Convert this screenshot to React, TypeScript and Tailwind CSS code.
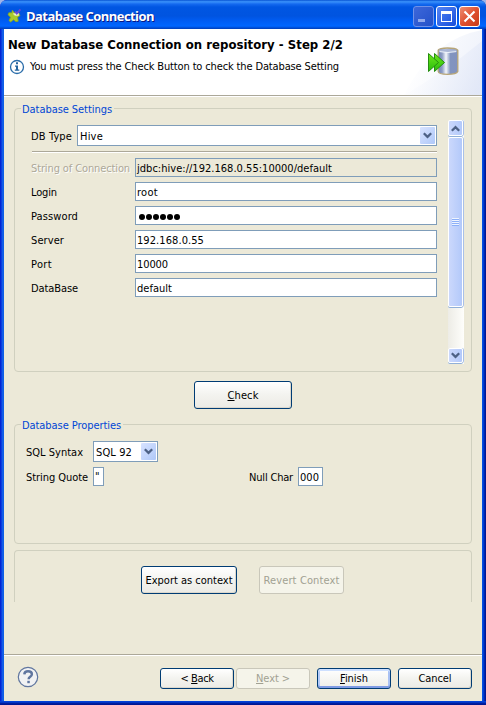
import { useLayoutEffect, useRef, useState, type ReactNode } from "react";

/** Single-line text whose tracking is adjusted so that it fills the given width. */
function Fit({ w, className = "", children }: { w: number; className?: string; children: ReactNode }) {
  const ref = useRef<HTMLSpanElement>(null);
  const [spacing, setSpacing] = useState(0);
  useLayoutEffect(() => {
    const el = ref.current;
    if (!el) return;
    const count = (el.textContent || "").length;
    setSpacing((w - el.getBoundingClientRect().width) / count);
  }, [w]);
  return (
    <span ref={ref} className={`inline-block shrink-0 whitespace-pre ${className}`} style={{ letterSpacing: `${spacing}px` }}>
      {children}
    </span>
  );
}

function Chevron({ up = false }: { up?: boolean }) {
  return (
    <svg width="9" height="7" viewBox="0 0 9 7" className={up ? "rotate-180" : ""}>
      <path d="M.8 1.2 4.5 4.9 8.2 1.2" fill="none" stroke="#4d6185" strokeWidth="2.3" />
    </svg>
  );
}

function Combo({ width, text, textWidth }: { width: string; text: string; textWidth: number }) {
  return (
    <div className={`flex h-[21px] items-center border border-[#7f9db9] bg-white p-px pl-[2px] ${width}`}>
      <Fit w={textWidth} className="pt-[2px]">{text}</Fit>
      <div className="ml-auto flex h-[17px] w-[15px] items-center justify-center rounded-[1px] bg-linear-to-br from-[#d8e3ff] to-[#afc8f8]">
        <Chevron />
      </div>
    </div>
  );
}

function Field({ label, labelWidth, value, valueWidth, disabled = false }: {
  label: string; labelWidth: number; value: string; valueWidth: number; disabled?: boolean;
}) {
  return (
    <div className="flex h-[19px] items-center">
      <div className={`flex w-[104px] items-center pt-[2px] ${disabled ? "text-[#aca899] [text-shadow:1px_1px_0_white]" : ""}`}>
        <Fit w={labelWidth}>{label}</Fit>
      </div>
      <div className={`flex h-[19px] w-[302px] items-center border border-[#7f9db9] pl-px ${disabled ? "bg-[#ece9d8]" : "bg-white"}`}>
        {label === "Password" ? (
          <span className="flex gap-px pl-[1.5px] pt-[2px]">
            {value.split("").map((_, i) => <i key={i} className="size-[6px] rounded-full bg-black" />)}
          </span>
        ) : (
          <Fit w={valueWidth} className="pt-[2px]">{value}</Fit>
        )}
      </div>
    </div>
  );
}

function Btn({ className, w, children, disabled = false, primary = false }: {
  className: string; w: number; children: ReactNode; disabled?: boolean; primary?: boolean;
}) {
  const look = disabled
    ? "border-[#c9c7ba] bg-[#f5f4ea] text-[#a1a192]"
    : primary
      ? "border-[#003c74] bg-linear-to-b from-white to-[#eeeee8] shadow-[inset_0_2px_0_#cee0ff,inset_0_-2px_0_#7f9be4,inset_2px_0_0_#b4cbf8,inset_-2px_0_0_#a9c1f3]"
      : "border-[#003c74] bg-linear-to-b from-white via-[#f3f3ef] to-[#ecebe5] shadow-[inset_-1px_-1px_0_#dcd8cd]";
  return (
    <div className={`flex items-center justify-center rounded-[3px] border ${look} ${className}`}>
      <Fit w={w} className="pt-px">{children}</Fit>
    </div>
  );
}

function Legend({ w, children }: { w: number; children: ReactNode }) {
  return (
    <div className="absolute -top-[6px] left-[6px] flex h-[14px] items-center bg-[#ece9d8] pl-px pr-[2px] text-[#0046d5]">
      <Fit w={w}>{children}</Fit>
    </div>
  );
}

function Scrollbar() {
  const face = "border border-white bg-linear-to-r from-[#cbd8fc] to-[#b3c9fa] rounded-[2px] shadow-[0_1px_0_#91b0d8,1px_0_0_#a9c0e8]";
  return (
    <div className="ml-[11px] mt-[11px] flex h-[244px] w-4 flex-col bg-linear-to-r from-[#edece6] to-[#fefefb] pr-px">
      <div className={`flex h-4 shrink-0 items-center justify-center ${face}`}><Chevron up /></div>
      <div className={`mt-px flex h-[170px] shrink-0 flex-col items-center justify-center ${face}`}>
        <div className="h-2 w-[7px] bg-[repeating-linear-gradient(to_bottom,#eef4fe_0px,#eef4fe_1px,#8cb0f8_1px,#8cb0f8_2px)]" />
      </div>
      <div className={`mt-auto mb-px flex h-[15px] shrink-0 items-center justify-center ${face}`}><Chevron /></div>
    </div>
  );
}

function TitleBar() {
  const control = "flex size-[21px] rounded-[3px] border";
  return (
    <header className="flex h-[29px] shrink-0 items-center rounded-t-[7px] bg-[linear-gradient(to_bottom,#0753d3_0%,#3a92fb_6%,#1469ef_14%,#0056e2_24%,#0054e0_55%,#005cf3_72%,#0066ff_90%,#0048cc_97%,#003db8_100%)] pl-[7px] pr-[6px]">
      <svg width="15" height="16" viewBox="0 0 15 16" className="mt-[2px]">
        <path d="M5.3 2.2 7.4 4.8 11.8 5.2 13 7.6 10.6 9.2 11.2 13.2 9 13.7 6.6 11.8 3.6 14 2 12.6 3.6 9.2 1 6.8 1.8 4.8 4.8 4.8Z" fill="#a9ca2c" stroke="#85a620" strokeWidth=".8" />
        <path d="M6 5.6 8 7.4h3.6V5.2" fill="#f1f4dc" stroke="#e6edb0" strokeWidth=".6" />
        <path d="m8 3.4 1.8 2.2L13.4 1.4" fill="none" stroke="#6548d4" strokeWidth="1.8" />
      </svg>
      <Fit w={128} className="ml-[4px] mt-[3px] font-['Open_Sans',sans-serif] text-[13px] leading-4 font-bold text-white [text-shadow:1px_1px_0_#0a1883]">Database Connection</Fit>
      <div className="ml-auto mt-[3px] flex gap-[2px]">
        <div className={`${control} items-end border-[#6f91e8] bg-linear-to-br from-[#3d67da] to-[#2351c9] pb-[4px] pl-[4px]`}>
          <i className="h-[3px] w-[7px] bg-[#8fa8ec]" />
        </div>
        <div className={`${control} items-center justify-center border-white bg-linear-to-br from-[#5685f3] to-[#154bdb]`}>
          <i className="size-[11px] border border-t-[3px] border-white" />
        </div>
        <div className={`${control} items-center justify-center border-white bg-linear-to-br from-[#ed8c70] via-[#df5130] to-[#c93917]`}>
          <svg width="13" height="13" viewBox="0 0 13 13"><path d="m1.5 1.5 10 10m0-10-10 10" stroke="white" strokeWidth="2.1" /></svg>
        </div>
      </div>
    </header>
  );
}

function Banner() {
  return (
    <section className="relative h-[66px] shrink-0 bg-white">
      <svg width="78" height="66" viewBox="0 0 78 66" className="absolute right-0 top-0">
        <defs>
          <linearGradient id="sweep" x1="0" y1=".4" x2="1" y2=".7"><stop offset=".1" stopColor="#fff" /><stop offset="1" stopColor="#dde4f6" /></linearGradient>
          <linearGradient id="drum"><stop stopColor="#7183b4" /><stop offset=".2" stopColor="#8d9dc5" /><stop offset=".4" stopColor="#f4f7fc" /><stop offset=".62" stopColor="#8294bf" /><stop offset="1" stopColor="#8292be" /></linearGradient>
          <linearGradient id="arrow" x1="0" y1="0" x2="0" y2="1"><stop stopColor="#6fe61b" /><stop offset="1" stopColor="#27bd0c" /></linearGradient>
        </defs>
        <path d="M0 66Q28 10 78 1v65Z" fill="url(#sweep)" opacity=".5" />
        <path d="M0 66Q42 42 78 12v54Z" fill="url(#sweep)" opacity=".7" />
        <path d="M34.7 21.2Q36 19 44 19t10.3 2.2V42.5Q53 45.3 44 45.3t-9.3-2.8Z" fill="url(#drum)" stroke="#b7a577" strokeWidth="1.3" transform="translate(-.5 0)" />
        <path d="M35 20.8q8.5-1.8 17.5 0v1.4q-8.5 1.8-17.5 0Z" fill="#a9b6d6" />
        <path d="M35.5 22.6q8.5 1.8 16.8 0" fill="none" stroke="#eff4fb" />
        <path d="m30.5 24.5 10 9-10 9Z" fill="url(#arrow)" stroke="#258c10" />
        <path d="m24.5 24.5 10 9-10 9Z" fill="url(#arrow)" stroke="#258c10" />
      </svg>
      <div className="relative flex flex-col pl-1 pt-[8px]">
        <Fit w={335} className="self-start text-[13px] leading-4 font-bold">New Database Connection on repository - Step 2/2</Fit>
        <div className="mt-[6px] flex h-4 items-center pl-px">
          <svg width="16" height="16" viewBox="0 0 16 16">
            <circle cx="8" cy="8" r="6.5" fill="white" stroke="#296ca9" strokeWidth="1.3" />
            <path d="M7 3.2h2v2H7zM6 6.5h3v4h1.3v1.3H5.8v-1.3H7V7.8H6z" fill="#24649f" />
          </svg>
          <Fit w={309} className="ml-[5px] -mt-px">You must press the Check Button to check the Database Setting</Fit>
        </div>
      </div>
    </section>
  );
}

export default function App() {
  return (
    <div className="h-[705px] w-[486px] overflow-hidden bg-[#9eb4e9] font-['DejaVu_Sans_Condensed','DejaVu_Sans',sans-serif] text-[11px] leading-[14px] text-black">
      <div className="flex h-full flex-col rounded-t-[7px] bg-linear-to-r from-[#0019cf] via-[#0855dd] to-[#001590]">
        <TitleBar />
        <div className="flex min-h-0 grow bg-[linear-gradient(to_right,#0019cf_0px,#0831d9_1px,#166aee_3px,#0855dd_4px,#0855dd_482px,#0048e5_483px,#001da0_485px,#00138c_486px)]">
          <div className="flex w-full flex-col px-1">
            <Banner />
            <div className="h-[2px] shrink-0 border-t border-[#aca899] bg-white" />
            <main className="flex h-[557px] shrink-0 flex-col bg-[#ece9d8] px-[10px] pt-[11px]">
              <section className="relative flex h-[264px] shrink-0 rounded-[4px] border border-[#d0d0bf] pl-4">
                <Legend w={90}>Database Settings</Legend>
                <div className="w-[406px] pt-4">
                  <div className="flex items-center">
                    <div className="flex w-[46px] pt-[2px]"><Fit w={41}>DB Type</Fit></div>
                    <Combo width="w-[360px]" text="Hive" textWidth={23} />
                  </div>
                  <div className="mt-[5px] ml-px h-[2px] border-t border-[#aca899] bg-white" />
                  <div className="mt-[5px] flex flex-col gap-[5px]">
                    <Field label="String of Connection" labelWidth={99} value="jdbc:hive://192.168.0.55:10000/default" valueWidth={195} disabled />
                    <Field label="Login" labelWidth={26} value="root" valueWidth={21} />
                    <Field label="Password" labelWidth={47} value="secret" valueWidth={42} />
                    <Field label="Server" labelWidth={33} value="192.168.0.55" valueWidth={67} />
                    <Field label="Port" labelWidth={21} value="10000" valueWidth={31} />
                    <Field label="DataBase" labelWidth={47} value="default" valueWidth={35} />
                  </div>
                </div>
                <Scrollbar />
              </section>
              <Btn className="mt-[9px] ml-[180px] h-7 w-[98px] shrink-0" w={31}><u>C</u>heck</Btn>
              <section className="relative mt-[15px] h-[120px] shrink-0 rounded-[4px] border border-[#d0d0bf] pl-[11px] pt-4">
                <Legend w={99}>Database Properties</Legend>
                <div className="flex items-center">
                  <div className="flex w-[67px] pt-[2px]"><Fit w={57}>SQL Syntax</Fit></div>
                  <Combo width="w-[65px]" text="SQL 92" textWidth={36} />
                </div>
                <div className="mt-[5px] flex h-[19px] items-center">
                  <div className="flex w-[67px] pt-[2px]"><Fit w={62}>String Quote</Fit></div>
                  <div className="flex h-[19px] w-[11px] items-center border border-[#7f9db9] bg-white pl-px pt-px">"</div>
                  <div className="ml-[145px] flex w-[49px] pt-[2px]"><Fit w={44}>Null Char</Fit></div>
                  <div className="flex h-[19px] w-[25px] items-center border border-[#7f9db9] bg-white pl-px"><Fit w={19} className="pt-[2px]">000</Fit></div>
                </div>
              </section>
              <section className="mt-[6px] flex h-[52px] shrink-0 rounded-t-[4px] border border-b-0 border-[#d0d0bf] pl-[126px] pt-[15px]">
                <Btn className="h-7 w-24" w={87}>Export as context</Btn>
                <Btn className="ml-[22px] h-7 w-[85px]" w={76} disabled>Revert Context</Btn>
              </section>
            </main>
            <div className="h-[2px] shrink-0 border-t border-[#aca899] bg-white" />
            <footer className="flex h-[45px] shrink-0 items-start bg-[#ece9d8] pl-[13px] pr-[10px] pt-[10px]">
              <svg width="22" height="22" viewBox="0 0 22 22">
                <circle cx="11" cy="11" r="9.7" fill="#f1f2f3" stroke="#60769f" strokeWidth="1.2" />
                <path d="M7.3 8.3C7.5 6 9 5.3 11 5.3c2.3 0 3.9 1 3.9 2.9 0 2.6-3.3 2.6-3.3 5" fill="none" stroke="#60769f" strokeWidth="2.4" />
                <path d="M10.3 14.8h2.5v2.4h-2.5z" fill="#60769f" />
              </svg>
              <div className="ml-auto mt-[2px] flex">
                <Btn className="h-[21px] w-[74px]" w={33}>&lt; <u>B</u>ack</Btn>
                <Btn className="ml-[2px] h-[21px] w-[74px]" w={34} disabled><u>N</u>ext &gt;</Btn>
                <Btn className="ml-[7px] h-[21px] w-[74px]" w={28} primary><u>F</u>inish</Btn>
                <Btn className="ml-[7px] h-[21px] w-[74px]" w={33}>Cancel</Btn>
              </div>
            </footer>
          </div>
        </div>
        <div className="h-1 shrink-0 bg-[linear-gradient(to_bottom,#0441d8_0%,#0441d8_25%,#001ea0_60%,#00138c_100%)]" />
      </div>
    </div>
  );
}
